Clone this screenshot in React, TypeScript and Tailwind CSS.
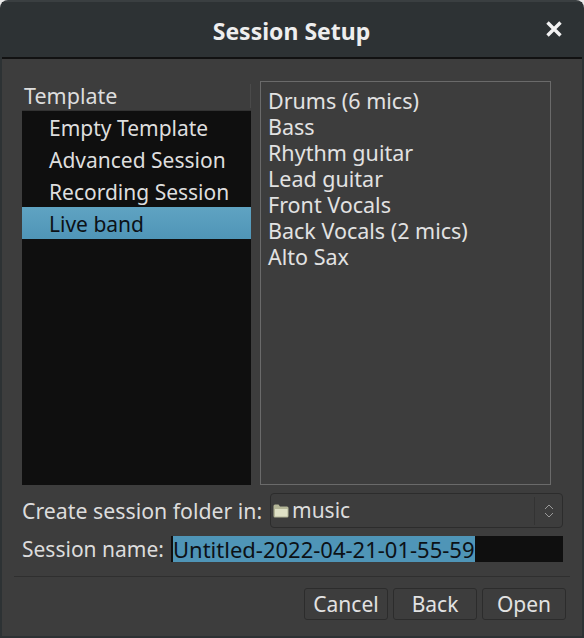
const templates = ["Empty Template", "Advanced Session", "Recording Session", "Live band"];
const tracks = ["Drums (6 mics)", "Bass", "Rhythm guitar", "Lead guitar", "Front Vocals", "Back Vocals (2 mics)", "Alto Sax"];

function FolderIcon() {
  return (
    <svg width="16" height="14" viewBox="0 0 16 14" className="shrink-0">
      <path d="M0.500 12 L0.500 2 Q0.500 0.500 2 0.500 L5.500 0.500 L7 2.500 L14 2.500 Q15.500 2.500 15.500 4 L15.500 12 Q15.500 13.500 14 13.500 L2 13.500 Q0.500 13.500 0.500 12 Z" fill="#b4b697" />
      <path d="M2 5 L14.500 5 L14.500 12.500 L2 12.500 Z" fill="#dfe1c6" />
    </svg>
  );
}

function DialogButton({ label, width }: { label: string; width: string }) {
  return (
    <button className={`h-[32px] ${width} rounded-[3px] border border-[#2c2c2c] bg-[#3d3d3d] text-[21px] leading-none text-[#e2e2e2]`}>
      {label}
    </button>
  );
}

export default function App() {
  return (
    <div className="h-[638px] w-[584px] overflow-hidden bg-[#e9e9e9] font-['Noto_Sans',sans-serif]">
      <div className="flex h-[638px] flex-col rounded-t-[8px] border-x-2 border-b-2 border-t-2 border-x-[#2d3234] border-b-[#2d3234] border-t-[#3a3f41] bg-[#3d3d3d]">
        <div className="flex h-[57px] shrink-0 items-center border-b-2 border-[#111111] bg-[#2d3234] pl-[36px] pr-[19px]">
          <div className="flex-1 pt-[3px] text-center text-[23px] font-bold text-[#eeeeee]">Session Setup</div>
          <svg width="18" height="18" viewBox="0 0 18 18" className="-mt-[2px]">
            <path d="M2.500 2.500 L15.500 15.500 M15.500 2.500 L2.500 15.500" stroke="#f2f2f2" strokeWidth="3.400" />
          </svg>
        </div>

        <div className="flex flex-1 flex-col pl-[20px] pr-[19px] pt-[22px]">
          <div className="flex h-[404px] gap-[9px]">
            <div className="flex w-[229px] flex-col">
              <div className="flex h-[30px] items-center border-b border-[#333333] pl-[2px] text-[21.500px] leading-none text-[#dddddd]">
                <span className="flex-1">Template</span>
                <span className="h-[24px] w-px bg-[#4a4a4a]" />
              </div>
              <div className="flex-1 bg-[#0f0f0f]">
                {templates.map((name) => (
                  <div
                    key={name}
                    className={`flex h-[32px] items-center pl-[27px] pt-[2px] text-[21px] leading-none ${
                      name === "Live band"
                        ? "bg-gradient-to-b from-[#5fa3c2] to-[#4f95b7] text-[#0c1116]"
                        : "text-[#dedede]"
                    }`}
                  >
                    {name}
                  </div>
                ))}
              </div>
            </div>
            <div className="w-[291px] border border-[#6a6a6a] px-[7px] pt-[6px]">
              {tracks.map((name) => (
                <div key={name} className="h-[26px] text-[21.500px] leading-[26px] text-[#e2e2e2]">
                  {name}
                </div>
              ))}
            </div>
          </div>

          <div className="mt-[8px] flex h-[35px] items-center text-[21.300px] leading-none text-[#dcdcdc]">
            <span className="w-[248px]">Create session folder in:</span>
            <div className="flex h-[35px] flex-1 items-center rounded-[4px] border border-[#2c2c2c] bg-[#3d3d3d] pl-[2px]">
              <FolderIcon />
              <span className="ml-[3px] flex-1 text-[21px]">music</span>
              <div className="flex h-[28px] w-[28px] items-center justify-center border-l border-[#333333]">
                <svg width="10" height="16" viewBox="0 0 10 16">
                  <path d="M1 6 L5 2 L9 6 M1 10 L5 14 L9 10" fill="none" stroke="#9a9a9a" strokeWidth="1" />
                </svg>
              </div>
            </div>
          </div>

          <div className="mt-[8px] flex h-[26px] items-center text-[22px] leading-none">
            <span className="w-[149px] text-[21px] text-[#dcdcdc]">Session name:</span>
            <div className="flex h-[26px] flex-1 items-center bg-[#0f0f0f]">
              <span className="h-[26px] w-[2px] bg-[#0f0f0f]" />
              <span className="flex h-[26px] items-center bg-[#4f95b7] text-[#0c1116]">Untitled-2022-04-21-01-55-59</span>
            </div>
          </div>

          <div className="-ml-[8px] -mr-[7px] mt-[14px] flex justify-end gap-[5px] border-t border-[#2f2f2f] pr-[4px] pt-[11px]">
            <DialogButton label="Cancel" width="w-[84px]" />
            <DialogButton label="Back" width="w-[84px]" />
            <DialogButton label="Open" width="w-[84px]" />
          </div>
        </div>
      </div>
    </div>
  );
}
